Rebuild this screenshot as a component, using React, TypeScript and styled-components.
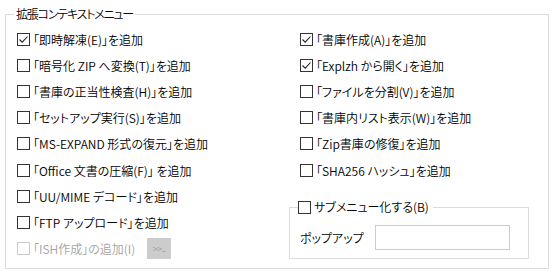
import styled, { createGlobalStyle } from 'styled-components';

const GlobalStyle = createGlobalStyle`
  html, body {
    margin: 0;
    padding: 0;
    background: #ffffff;
  }
  body {
    font-family: "Noto Sans CJK JP", "Noto Sans", sans-serif;
    font-size: 12px;
    font-weight: 350;
    font-feature-settings: "palt";
    color: #000;
  }
`;

const Page = styled.div`
  width: 555px;
  height: 273px;
  box-sizing: border-box;
  padding: 4px 6px 0 5px;
`;

const Group = styled.fieldset`
  margin: 0;
  height: 265px;
  box-sizing: border-box;
  border: 1px solid #dcdcdc;
  padding: 0 0 0 11px;
  min-width: 0;
`;

const Title = styled.legend`
  margin-left: -3px;
  padding: 0 2px;
  line-height: 20px;
  font-size: 12px;
  letter-spacing: -1.2px;
`;

const Columns = styled.div`
  display: grid;
  grid-template-columns: 283px 1fr;
  padding-top: 2px;
`;

const Column = styled.div`
  display: flex;
  flex-direction: column;
`;

const Row = styled.label<{ $disabled?: boolean }>`
  display: flex;
  align-items: center;
  gap: 3px;
  height: 26.2px;
  white-space: nowrap;
  color: ${p => (p.$disabled ? '#a3a3a3' : '#000')};
`;

const Box = styled.span<{ $disabled?: boolean }>`
  flex: none;
  width: 13px;
  height: 13px;
  box-sizing: border-box;
  border: 1px solid ${p => (p.$disabled ? '#cccccc' : '#333333')};
  background: #fff;
  display: grid;
  place-items: center;
`;

const MoreButton = styled.span`
  margin-left: 9px;
  width: 24px;
  height: 21px;
  background: #cccccc;
  color: #9a9a9a;
  font-size: 9px;
  display: grid;
  place-items: center;
  letter-spacing: -0.5px;
`;

const SubGroup = styled.fieldset`
  margin: 16px 0 0 -11px;
  width: 240px;
  height: 60px;
  box-sizing: border-box;
  border: 1px solid #dcdcdc;
  padding: 0 0 0 10px;
  min-width: 0;
`;

const SubTitle = styled.legend`
  margin-left: -2px;
  padding: 0 4px 0 0;
  line-height: 16px;
  display: flex;
  align-items: center;
  gap: 3px;
`;

const Field = styled.div`
  display: flex;
  align-items: center;
  margin-top: 10px;
`;

const FieldLabel = styled.span`
  width: 75px;
`;

const TextBox = styled.div`
  width: 135px;
  height: 25px;
  box-sizing: border-box;
  border: 1px solid #cccccc;
  background: #fff;
`;

const Check = ({ on }: { on?: boolean }) =>
  on ? (
    <svg width="11" height="11" viewBox="0 0 11 11">
      <path d="M1.5 5.5 L4.2 8.2 L9.5 2.5" fill="none" stroke="#222" strokeWidth="1.1" />
    </svg>
  ) : null;

const left: [string, boolean][] = [
  ['「即時解凍(E)」を追加', true],
  ['「暗号化 ZIP へ変換(T)」を追加', false],
  ['「書庫の正当性検査(H)」を追加', false],
  ['「セットアップ実行(S)」を追加', false],
  ['「MS-EXPAND 形式の復元」を追加', false],
  ['「Office 文書の圧縮(F)」 を追加', false],
  ['「UU/MIME デコード」を追加', false],
  ['「FTP アップロード」を追加', false],
];

const right: [string, boolean][] = [
  ['「書庫作成(A)」を追加', true],
  ['「Explzh から開く」を追加', true],
  ['「ファイルを分割(V)」を追加', false],
  ['「書庫内リスト表示(W)」を追加', false],
  ['「Zip書庫の修復」を追加', false],
  ['「SHA256 ハッシュ」を追加', false],
];

const App = () => (
  <>
    <GlobalStyle />
    <Page>
      <Group>
        <Title>拡張コンテキストメニュー</Title>
        <Columns>
          <Column>
            {left.map(([text, on]) => (
              <Row key={text}>
                <Box><Check on={on} /></Box>
                {text}
              </Row>
            ))}
            <Row $disabled>
              <Box $disabled />
              「ISH作成」の追加(I)
              <MoreButton>&gt;&gt;..</MoreButton>
            </Row>
          </Column>
          <Column>
            {right.map(([text, on]) => (
              <Row key={text}>
                <Box><Check on={on} /></Box>
                {text}
              </Row>
            ))}
            <SubGroup>
              <SubTitle>
                <Box />
                サブメニュー化する(B)
              </SubTitle>
              <Field>
                <FieldLabel>ポップアップ</FieldLabel>
                <TextBox />
              </Field>
            </SubGroup>
          </Column>
        </Columns>
      </Group>
    </Page>
  </>
);

export default App;
